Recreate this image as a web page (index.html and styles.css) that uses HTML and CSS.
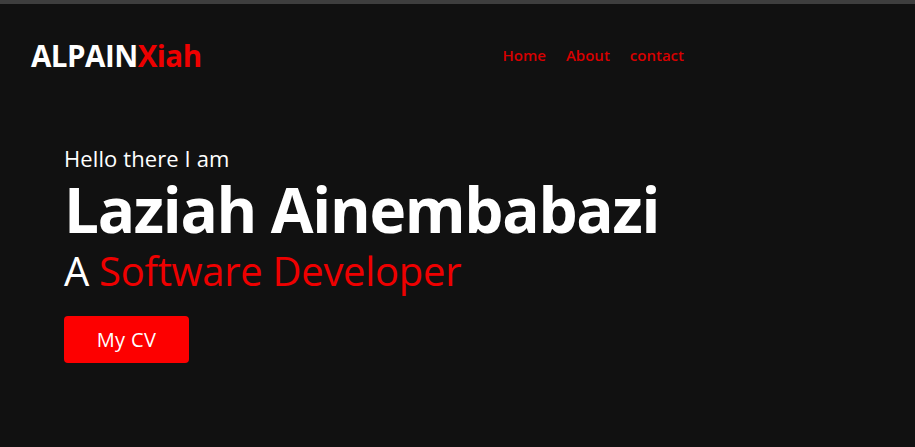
FILE: index.html
```html
<!DOCTYPE html>
<html lang="en">
<head>
<meta charset="utf-8">
<title>ALPAINXiah</title>
<link rel="stylesheet" href="styles.css">
</head>
<body>
<div class="topbar"></div>
<header class="header">
  <a class="logo" href="#">ALPAIN<span class="accent">Xiah</span></a>
  <nav class="nav">
    <a href="#">Home</a>
    <a href="#">About</a>
    <a href="#">contact</a>
  </nav>
</header>
<main class="hero">
  <p class="hello">Hello there I am</p>
  <h1 class="name">Laziah Ainembabazi</h1>
  <h2 class="role">A <span class="accent">Software Developer</span></h2>
  <a class="btn" href="#">My CV</a>
</main>
</body>
</html>
```
FILE: styles.css
```css
* { box-sizing: border-box; margin: 0; padding: 0; }
html, body { height: 100%; }
body {
  background: #111111;
  color: #fff;
  font-family: "Open Sans", "Noto Sans", sans-serif;
  overflow: hidden;
}
a { text-decoration: none; }
.topbar { height: 4px; background: #3e3e3e; }
.header {
  display: flex;
  align-items: center;
  height: 102px;
  padding: 0 0 0 31px;
}
.logo {
  color: #fff;
  font-weight: 700;
  font-size: 29.5px;
  letter-spacing: -0.5px;
}
.accent { color: #ee0000; }
.nav {
  display: flex;
  gap: 20px;
  margin-left: 301px;
}
.nav a {
  color: #d80000;
  font-size: 15px;
  font-weight: 600;
}
.hero {
  display: flex;
  flex-direction: column;
  align-items: flex-start;
  padding: 40px 0 0 64px;
}
.hello {
  font-size: 22px;
  line-height: 24px;
  letter-spacing: 0.1px;
}
.name {
  font-size: 62px;
  font-weight: 700;
  line-height: 78px;
  letter-spacing: -1.3px;
}
.role {
  font-size: 40px;
  font-weight: 400;
  line-height: 46px;
  letter-spacing: -0.3px;
}
.btn {
  display: inline-flex;
  align-items: center;
  justify-content: center;
  margin-top: 22px;
  width: 125px;
  height: 47px;
  background: #fd0000;
  color: #fff;
  border-radius: 4px;
  font-size: 20px;
  letter-spacing: 0.4px;
}
```
